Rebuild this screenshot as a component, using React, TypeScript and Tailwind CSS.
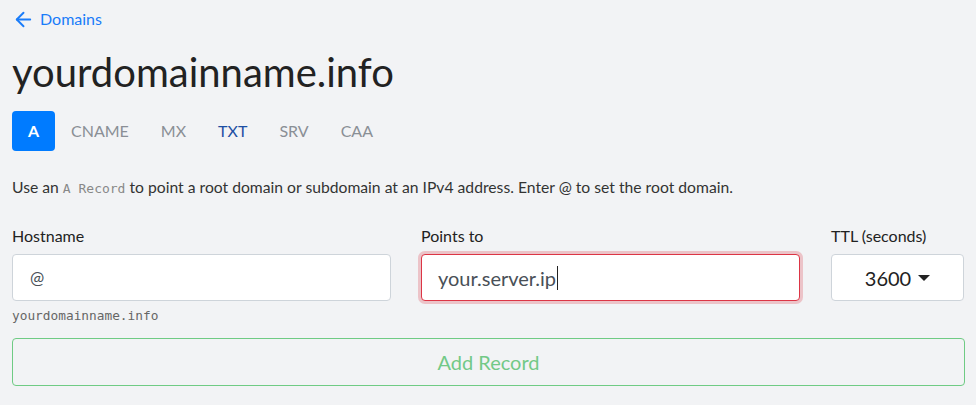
import { ArrowLeft } from "lucide-react";

const tabs = [
  { label: "CNAME", color: "text-[#8a8f95]" },
  { label: "MX", color: "text-[#8a8f95]" },
  { label: "TXT", color: "text-[#1d4fa3]" },
  { label: "SRV", color: "text-[#8a8f95]" },
  { label: "CAA", color: "text-[#8a8f95]" },
];

export default function App() {
  return (
    <div className="min-h-[405px] bg-[#f2f3f5] px-3 pt-[8px] font-['Lato','Open_Sans',sans-serif] text-[#212529]">
      {/* Back link */}
      <a href="#" className="flex h-[22px] items-center gap-[5px] text-[16px] text-[#1a7cf9]">
        <ArrowLeft className="h-[23px] w-[23px]" strokeWidth={2} />
        Domains
      </a>

      <h1 className="mt-[18px] text-[40px] leading-[48px] text-[#222]">yourdomainname.info</h1>

      {/* Record type tabs */}
      <div className="mt-[15px] flex items-center">
        <button className="h-[40px] w-[43px] rounded-[4px] bg-[#007bff] text-[16px] font-bold text-white">A</button>
        <div className="ml-[16px] flex text-[16px]">
          {tabs.map((t) => (
            <span key={t.label} className={`${t.color} mr-[32px]`}>
              {t.label}
            </span>
          ))}
        </div>
      </div>

      <p className="mt-[25px] text-[15.7px] leading-[22px] text-[#333]">
        Use an <code className="font-['DejaVu_Sans_Mono',monospace] text-[13px] text-[#888]">A Record</code> to point a root domain or
        subdomain at an IPv4 address. Enter @ to set the root domain.
      </p>

      {/* Form */}
      <div className="mt-[26px] grid grid-cols-[379px_379px_134px] gap-x-[30px]">
        <div>
          <label className="block text-[16px] leading-[20px] text-[#222]">Hostname</label>
          <div className="mt-[8px] flex h-[47px] items-center rounded-[4px] border border-[#ced4da] bg-white px-[17px] text-[17px] text-[#495057]">
            @
          </div>
          <div className="mt-[7px] font-['DejaVu_Sans_Mono',monospace] text-[12.8px] leading-[16px] text-[#666]">
            yourdomainname.info
          </div>
        </div>
        <div>
          <label className="block text-[16px] leading-[20px] text-[#222]">Points to</label>
          <div className="mt-[8px] flex h-[47px] items-center rounded-[4px] border border-[#dc3545] bg-white px-[16px] text-[20px] text-[#495057] shadow-[0_0_0_3px_rgba(220,53,69,0.25)]">
            your.server.ip<span className="ml-[1px] h-[24px] w-px bg-[#222]" />
          </div>
        </div>
        <div className="ml-[1px]">
          <label className="block text-[16px] leading-[20px] text-[#222]">TTL (seconds)</label>
          <div className="mt-[8px] flex h-[47px] items-center justify-center gap-[7px] rounded-[4px] border border-[#ced4da] bg-white text-[20px] text-[#222]">
            3600
            <span className="h-0 w-0 border-x-[6px] border-t-[6px] border-x-transparent border-t-[#222]" />
          </div>
        </div>
      </div>

      <button className="mt-[14px] flex h-[48px] w-[953px] items-center justify-center rounded-[4px] border border-[#6fcb84] text-[20px] text-[#72c987]">
        Add Record
      </button>
    </div>
  );
}
